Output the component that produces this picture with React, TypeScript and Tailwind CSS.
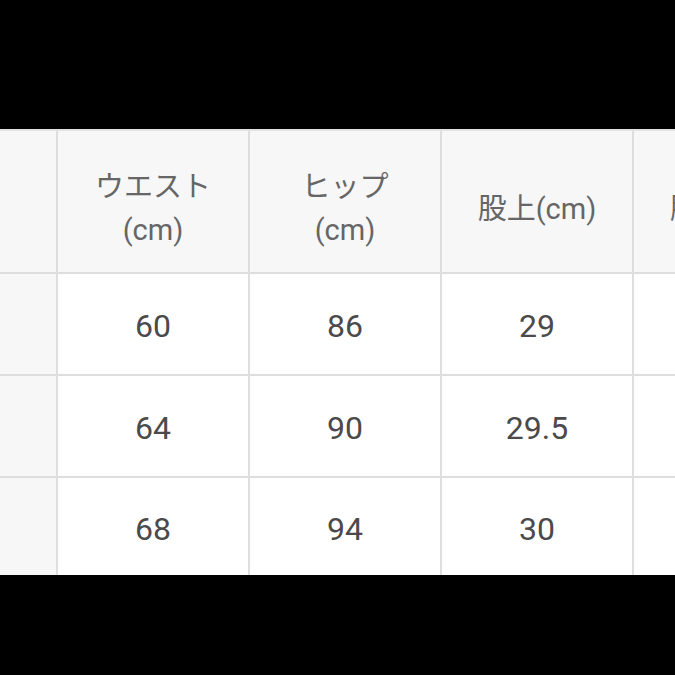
const rows = [
  ["60", "86", "29", ""],
  ["64", "90", "29.5", ""],
  ["68", "94", "30", ""],
];

const headers = [
  ["ウエスト", "(cm)"],
  ["ヒップ", "(cm)"],
  ["股上(cm)"],
  ["股下(cm)"],
];

const App = () => {
  return (
    <div
      className="w-[675px] h-[675px] bg-black overflow-hidden flex flex-col"
      style={{ fontFamily: 'Roboto, "Noto Sans CJK JP", sans-serif' }}
    >
      <div className="h-[129px] shrink-0" />
      <div className="border-t-2 border-[#e2e2e2] bg-white">
        {/* header */}
        <div className="flex h-[143px] bg-[#f7f7f7] border-b-2 border-[#dedede]">
          <div className="w-[56px] shrink-0" />
          {headers.map((h, i) => (
            <div
              key={i}
              className="w-[192px] shrink-0 border-l-2 border-[#dedede] flex flex-col items-center justify-center pt-[15px] text-[29px] leading-[43px] text-[#666666]"
            >
              {h.map((line, j) => (
                <span key={j} className="whitespace-nowrap">
                  {line}
                </span>
              ))}
            </div>
          ))}
        </div>
        {/* body */}
        {rows.map((r, i) => (
          <div
            key={i}
            className={
              i < rows.length - 1
                ? "flex h-[102px] border-b-2 border-[#dedede]"
                : "flex h-[97px]"
            }
          >
            <div className="w-[56px] shrink-0 bg-[#f7f7f7]" />
            {r.map((v, j) => (
              <div
                key={j}
                className="w-[192px] shrink-0 border-l-2 border-[#dedede] bg-white flex items-center justify-center pt-[4px] text-[32px] text-[#4a4a4a]"
              >
                {v}
              </div>
            ))}
          </div>
        ))}
      </div>
    </div>
  );
};

export default App;
